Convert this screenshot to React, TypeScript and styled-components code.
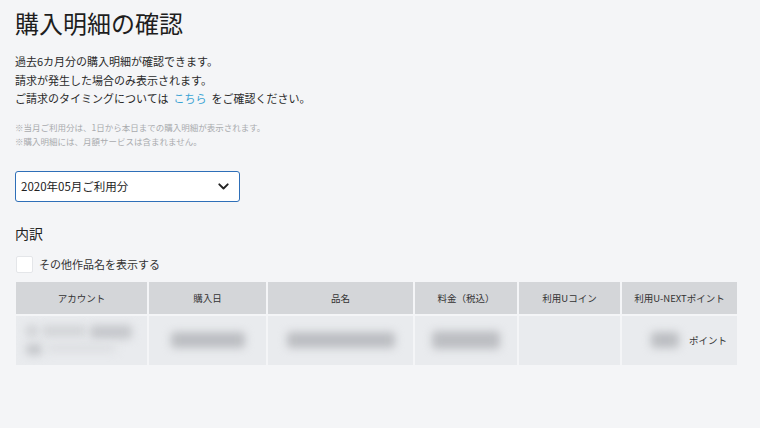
import React from "react";
import styled, { createGlobalStyle } from "styled-components";

const GlobalStyle = createGlobalStyle`
  html, body {
    margin: 0;
    padding: 0;
    background: #f4f5f7;
  }
  body {
    font-family: "Noto Sans CJK JP", "Noto Sans", "Liberation Sans", sans-serif;
    color: #222;
  }
`;

const Page = styled.div`
  width: 760px;
  height: 428px;
  box-sizing: border-box;
  padding: 6px 16px 0 15px;
  background: #f4f5f7;
`;

const Title = styled.h1`
  margin: 0;
  font-size: 24px;
  font-weight: 400;
  line-height: 34px;
  color: #1e1e1e;
`;

const Lead = styled.div`
  margin-top: 12px;
  font-size: 11px;
  line-height: 18.5px;
  color: #2a2a2a;
`;

const Link = styled.a`
  color: #3aa3d4;
  text-decoration: none;
  margin: 0 5px;
`;

const Notes = styled.div`
  margin-top: 12px;
  font-size: 8.5px;
  line-height: 14px;
  color: #a9abae;
`;

const SelectBox = styled.div`
  margin-top: 23px;
  width: 225px;
  height: 31px;
  box-sizing: border-box;
  border: 1.5px solid #2e6fb8;
  border-radius: 3px;
  background: #fff;
  display: flex;
  align-items: center;
  justify-content: space-between;
  padding: 0 10px 0 5px;
  font-size: 11.5px;
  color: #222;
`;

const SectionTitle = styled.h2`
  margin: 21px 0 0 0;
  font-size: 14px;
  font-weight: 400;
  line-height: 20px;
  color: #222;
`;

const CheckRow = styled.label`
  margin-top: 13px;
  display: flex;
  align-items: center;
  gap: 6px;
  font-size: 11px;
  color: #333;
`;

const CheckBox = styled.span`
  width: 15px;
  height: 15px;
  margin-left: 1px;
  background: #fff;
  border: 1px solid #e4e6e9;
  border-radius: 2px;
`;

const Table = styled.div`
  margin-top: 9px;
  margin-left: 1px;
  display: grid;
  grid-template-columns: 131px 117px 145px 102px 101px 115px;
  grid-template-rows: 32px 49px;
  column-gap: 2px;
  row-gap: 2px;
`;

const HeadCell = styled.div`
  background: #d4d6d9;
  display: flex;
  align-items: center;
  justify-content: center;
  font-size: 9.5px;
  color: #333;
`;

const BodyCell = styled.div<{ $align?: string }>`
  background: #e9ebee;
  display: flex;
  align-items: center;
  justify-content: ${(p) => p.$align || "center"};
  padding: 0 10px;
  font-size: 9.5px;
  color: #333;
  overflow: hidden;
`;

const Blur = styled.div<{ $w: number; $h: number; $tone?: string }>`
  width: ${(p) => p.$w}px;
  height: ${(p) => p.$h}px;
  flex: none;
  background: ${(p) => p.$tone || "#bcbec2"};
  filter: blur(4.5px);
  border-radius: 4px;
`;

const BlurStack = styled.div`
  display: flex;
  flex-direction: column;
  gap: 5px;
  width: 100%;
`;

const BlurLine = styled.div`
  display: flex;
  gap: 4px;
`;

const PointLabel = styled.span`
  margin-left: 10px;
`;

const Chevron = () => (
  <svg width="11" height="7" viewBox="0 0 11 7">
    <path d="M1.3 1.3 L5.5 5.5 L9.7 1.3" fill="none" stroke="#222" strokeWidth="1.9" strokeLinecap="round" strokeLinejoin="round" />
  </svg>
);

const heads = ["アカウント", "購入日", "品名", "料金（税込）", "利用Uコイン", "利用U-NEXTポイント"];

export default function App() {
  return (
    <>
      <GlobalStyle />
      <Page>
        <Title>購入明細の確認</Title>
        <Lead>
          過去6カ月分の購入明細が確認できます。
          <br />
          請求が発生した場合のみ表示されます。
          <br />
          ご請求のタイミングについては<Link href="#">こちら</Link>をご確認ください。
        </Lead>
        <Notes>
          ※当月ご利用分は、1日から本日までの購入明細が表示されます。
          <br />
          ※購入明細には、月額サービスは含まれません。
        </Notes>
        <SelectBox>
          <span>2020年05月ご利用分</span>
          <Chevron />
        </SelectBox>
        <SectionTitle>内訳</SectionTitle>
        <CheckRow>
          <CheckBox />
          その他作品名を表示する
        </CheckRow>
        <Table>
          {heads.map((h) => (
            <HeadCell key={h}>{h}</HeadCell>
          ))}
          <BodyCell $align="flex-start">
            <BlurStack>
              <BlurLine>
                <Blur $w={12} $h={12} $tone="#d0d2d5" />
                <Blur $w={44} $h={12} $tone="#d3d5d8" />
                <Blur $w={42} $h={14} $tone="#c6c8cc" />
              </BlurLine>
              <BlurLine>
                <Blur $w={16} $h={11} $tone="#c4c6ca" />
                <Blur $w={70} $h={8} $tone="#dcdee1" />
              </BlurLine>
            </BlurStack>
          </BodyCell>
          <BodyCell>
            <Blur $w={74} $h={16} />
          </BodyCell>
          <BodyCell>
            <Blur $w={108} $h={16} />
          </BodyCell>
          <BodyCell>
            <Blur $w={68} $h={18} />
          </BodyCell>
          <BodyCell />
          <BodyCell $align="flex-end">
            <Blur $w={28} $h={16} />
            <PointLabel>ポイント</PointLabel>
          </BodyCell>
        </Table>
      </Page>
    </>
  );
}
